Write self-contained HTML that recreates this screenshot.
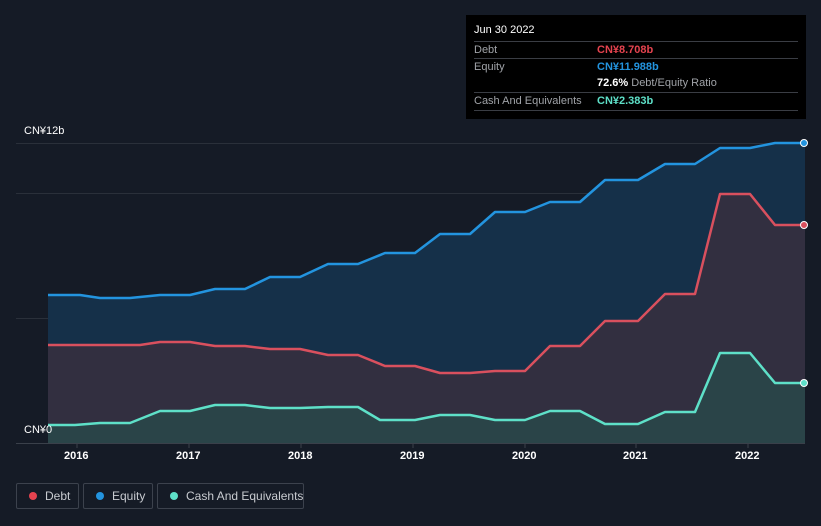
<!DOCTYPE html>
<html><head><style>
body{margin:0;width:821px;height:526px;background:#151b26;font-family:"Liberation Sans",sans-serif;overflow:hidden;position:relative}
.tt{position:absolute;left:466px;top:15px;width:340px;height:104px;background:#000;color:#fff;font-size:11px}
.row{position:absolute;left:8px;width:324px;border-top:1px solid #3a3d44;height:17px;line-height:17px}
.row .l{color:#a0a3a8}.row .v{position:absolute;left:123px;font-weight:bold}
.leg{position:absolute;top:483px;height:26px;border:1px solid #3c424d;border-radius:2px;color:#c8cbd0;font-size:12px;line-height:24px;box-sizing:border-box;white-space:nowrap}
.leg i{position:absolute;left:12px;top:8px;width:8px;height:8px;border-radius:50%}
.leg span{position:absolute;left:28px}
.ax{position:absolute;top:450px;color:#fff;font-size:11px;font-weight:bold}
</style></head><body>
<svg width="821" height="526" style="position:absolute;left:0;top:0">
<g stroke="#2a303a" stroke-width="1"><line x1="16" y1="143.5" x2="805" y2="143.5"/><line x1="16" y1="193.5" x2="805" y2="193.5"/><line x1="16" y1="318.5" x2="805" y2="318.5"/></g>
<polygon fill="#153049" points="48,443 48,295 80,295 100,298 130,298 160,295 190,295 215,289 245,289 270,277 300,277 328,264 358,264 385,253 415,253 440,234 470,234 495,212 525,212 550,202 580,202 605,180 638,180 665,164 695,164 720,148 750,148 775,143 805,143 805,443"/>
<polygon fill="#322f40" points="48,443 48,345 140,345 160,342 190,342 215,346 245,346 270,349 300,349 328,355 358,355 385,366 415,366 440,373 470,373 495,371 525,371 550,346 580,346 605,321 638,321 665,294 695,294 720,194 750,194 775,225 805,225 805,443"/>
<polygon fill="#2a4448" points="48,443 48,425 75,425 100,423 130,423 160,411 190,411 215,405 245,405 270,408 300,408 328,407 358,407 380,420 415,420 440,415 470,415 495,420 525,420 550,411 580,411 605,424 638,424 665,412 695,412 720,353 750,353 775,383 805,383 805,443"/>
<g fill="none" stroke-width="2.5" stroke-linejoin="round">
<polyline stroke="#2394df" points="48,295 80,295 100,298 130,298 160,295 190,295 215,289 245,289 270,277 300,277 328,264 358,264 385,253 415,253 440,234 470,234 495,212 525,212 550,202 580,202 605,180 638,180 665,164 695,164 720,148 750,148 775,143 805,143"/>
<polyline stroke="#d9505e" points="48,345 140,345 160,342 190,342 215,346 245,346 270,349 300,349 328,355 358,355 385,366 415,366 440,373 470,373 495,371 525,371 550,346 580,346 605,321 638,321 665,294 695,294 720,194 750,194 775,225 805,225"/>
<polyline stroke="#5ee0c8" points="48,425 75,425 100,423 130,423 160,411 190,411 215,405 245,405 270,408 300,408 328,407 358,407 380,420 415,420 440,415 470,415 495,420 525,420 550,411 580,411 605,424 638,424 665,412 695,412 720,353 750,353 775,383 805,383"/>
</g>
<circle cx="804" cy="143" r="3.5" fill="#2394df" stroke="#fff"/>
<circle cx="804" cy="225" r="3.5" fill="#d9505e" stroke="#fff"/>
<circle cx="804" cy="383" r="3.5" fill="#5ee0c8" stroke="#fff"/>
<line x1="16" y1="443.5" x2="805" y2="443.5" stroke="#3a404a"/>
<g stroke="#3a404a"><line x1="77" y1="444" x2="77" y2="448"/><line x1="189" y1="444" x2="189" y2="448"/><line x1="301" y1="444" x2="301" y2="448"/><line x1="413" y1="444" x2="413" y2="448"/><line x1="525" y1="444" x2="525" y2="448"/><line x1="636" y1="444" x2="636" y2="448"/><line x1="748" y1="444" x2="748" y2="448"/></g>
</svg>
<div style="position:absolute;left:24px;top:125px;color:#fff;font-size:11px">CN¥12b</div>
<div style="position:absolute;left:24px;top:424px;color:#fff;font-size:11px">CN¥0</div>
<div class="ax" style="left:64px">2016</div><div class="ax" style="left:176px">2017</div><div class="ax" style="left:288px">2018</div><div class="ax" style="left:400px">2019</div><div class="ax" style="left:512px">2020</div><div class="ax" style="left:623px">2021</div><div class="ax" style="left:735px">2022</div>
<div class="tt">
<div style="position:absolute;left:8px;top:9px">Jun 30 2022</div>
<div class="row" style="top:26px"><span class="l">Debt</span><span class="v" style="color:#e5434f">CN¥8.708b</span></div>
<div class="row" style="top:43px"><span class="l">Equity</span><span class="v" style="color:#2394df">CN¥11.988b</span></div>
<div class="row" style="top:60px;border:none"><span class="v" style="color:#fff">72.6% <span style="font-weight:normal;color:#a0a3a8">Debt/Equity Ratio</span></span></div>
<div class="row" style="top:77px"><span class="l">Cash And Equivalents</span><span class="v" style="color:#5ee0c8">CN¥2.383b</span></div>
<div class="row" style="top:95px;height:0"></div>
</div>
<div class="leg" style="left:16px;width:63px"><i style="background:#e5434f"></i><span>Debt</span></div>
<div class="leg" style="left:83px;width:70px"><i style="background:#2394df"></i><span>Equity</span></div>
<div class="leg" style="left:157px;width:147px"><i style="background:#5ee0c8"></i><span>Cash And Equivalents</span></div>
</body></html>
